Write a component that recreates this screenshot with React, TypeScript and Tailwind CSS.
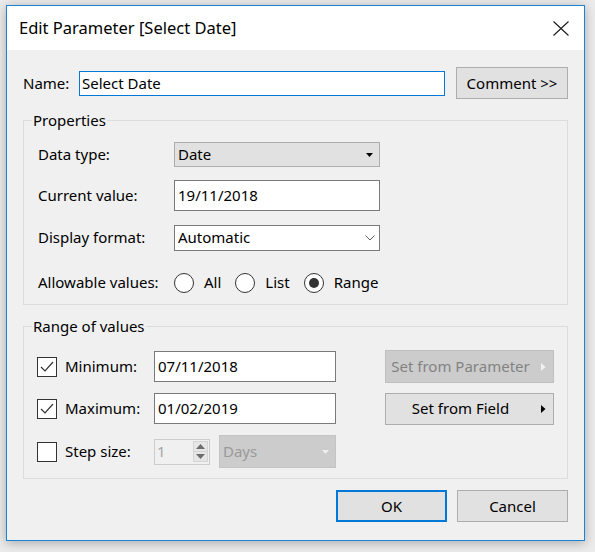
import type { ReactNode } from "react";

function CloseIcon() {
	return (
		<svg width="16" height="15" viewBox="0 0 16 15" className="block">
			<path d="M0.5 0.5 L15.5 14.5 M15.5 0.5 L0.5 14.5" stroke="#1a1a1a" strokeWidth="1.1" fill="none" />
		</svg>
	);
}

function Checkbox({ checked }: { checked?: boolean }) {
	return (
		<div className="w-[20px] h-[20px] shrink-0 border border-[#333333] bg-white">
			{checked && (
				<svg width="18" height="18" viewBox="0 0 18 18" className="block">
					<path d="M3 9 L7 13 L15 4" stroke="#333333" strokeWidth="1.2" fill="none" />
				</svg>
			)}
		</div>
	);
}

function Radio({ selected, label }: { selected?: boolean; label: string }) {
	return (
		<div className="flex items-center">
			<div className="w-[20px] h-[20px] rounded-full border border-[#333333] bg-white flex items-center justify-center">
				{selected && <div className="w-[10px] h-[10px] rounded-full bg-[#333333]" />}
			</div>
			<span className="ml-[10px]">{label}</span>
		</div>
	);
}

function Group({ title, children, className }: { title: string; children: ReactNode; className?: string }) {
	return (
		<fieldset className={`border border-[#dcdcdc] ${className ?? ""}`}>
			<legend className="ml-[8px] px-[1px] leading-[20px]">{title}</legend>
			{children}
		</fieldset>
	);
}

function Button({
	children,
	className,
	disabled,
	arrow,
}: {
	children: ReactNode;
	className?: string;
	disabled?: boolean;
	arrow?: boolean;
}) {
	const look = disabled ? "bg-[#cccccc] border-[#bfbfbf] text-[#838383]" : "bg-[#e1e1e1] border-[#adadad] text-black";
	return (
		<button type="button" className={`flex items-center border ${look} ${className ?? ""}`}>
			<span className="flex-1 text-center">{children}</span>
			{arrow && (
				<span className="w-[18px] flex items-center">
					<svg width="5" height="8" viewBox="0 0 5 8" className="ml-[6px] block">
						<path d="M0 0 L4.5 4 L0 8 Z" fill={disabled ? "#f2f2f2" : "#000000"} />
					</svg>
				</span>
			)}
		</button>
	);
}

function PropRow({ label, children, className }: { label: string; children: ReactNode; className?: string }) {
	return (
		<div className={`h-[31px] flex items-center ${className ?? ""}`}>
			<span className="w-[136px] shrink-0">{label}</span>
			{children}
		</div>
	);
}

export default function App() {
	return (
		<div className="w-[595px] h-[552px] bg-[#ebebeb] pt-[5px] pl-[6px] font-['Noto_Sans',sans-serif] text-[15px] text-black">
			<div className="w-[579px] h-[536px] border border-[#1883d7] bg-[#f0f0f0] shadow-[0_2px_10px_rgba(0,0,0,0.28)] flex flex-col">
				<div className="h-[44px] shrink-0 bg-white flex items-center justify-between pl-[12px] pr-[15px]">
					<span className="text-[16.5px]">Edit Parameter [Select Date]</span>
					<CloseIcon />
				</div>

				<div className="px-[16px] pt-[17px] flex flex-col">
					<div className="h-[32px] flex items-center">
						<span className="w-[56px] shrink-0">Name:</span>
						<div className="w-[366px] h-[25px] border border-[#0078d7] bg-white pl-[2px] flex items-center">
							Select Date
						</div>
						<Button className="ml-[11px] w-[112px] h-[32px]">Comment &gt;&gt;</Button>
					</div>

					<Group title="Properties" className="mt-[11px]">
						<div className="pl-[14px] pb-[6px]">
							<PropRow label="Data type:" className="mt-[9px]">
								<div className="w-[206px] h-[25px] border border-[#adadad] bg-[#e1e1e1] pl-[3px] pr-[6px] flex items-center justify-between">
									<span>Date</span>
									<svg width="7" height="4" viewBox="0 0 7 4" className="block">
										<path d="M0 0 L7 0 L3.5 4 Z" fill="#000000" />
									</svg>
								</div>
							</PropRow>
							<PropRow label="Current value:" className="mt-[10px]">
								<div className="w-[206px] h-[31px] border border-[#7a7a7a] bg-white pl-[3px] flex items-center">
									19/11/2018
								</div>
							</PropRow>
							<PropRow label="Display format:" className="mt-[11px]">
								<div className="w-[206px] h-[26px] border border-[#7a7a7a] bg-white pl-[3px] pr-[4px] flex items-center justify-between">
									<span>Automatic</span>
									<svg width="10" height="6" viewBox="0 0 10 6" className="block">
										<path d="M0.5 0.5 L5 5 L9.5 0.5" stroke="#606060" strokeWidth="1" fill="none" />
									</svg>
								</div>
							</PropRow>
							<PropRow label="Allowable values:" className="mt-[14px]">
								<div className="flex items-center gap-[14px]">
									<Radio label="All" />
									<Radio label="List" />
									<Radio label="Range" selected />
								</div>
							</PropRow>
						</div>
					</Group>

					<Group title="Range of values" className="mt-[11px]">
						<div className="pl-[13px] pb-[10px]">
							<div className="h-[33px] mt-[14px] flex items-center">
								<Checkbox checked />
								<span className="ml-[8px] w-[89px] shrink-0">Minimum:</span>
								<div className="w-[182px] h-[31px] border border-[#7a7a7a] bg-white pl-[3px] flex items-center">
									07/11/2018
								</div>
								<Button disabled arrow className="ml-[49px] w-[169px] h-[33px]">
									Set from Parameter
								</Button>
							</div>
							<div className="h-[33px] mt-[9px] flex items-center">
								<Checkbox checked />
								<span className="ml-[8px] w-[89px] shrink-0">Maximum:</span>
								<div className="w-[182px] h-[31px] border border-[#7a7a7a] bg-white pl-[3px] flex items-center">
									01/02/2019
								</div>
								<Button arrow className="ml-[49px] w-[169px] h-[32px]">
									Set from Field
								</Button>
							</div>
							<div className="h-[33px] mt-[10px] flex items-center">
								<Checkbox />
								<span className="ml-[8px] w-[89px] shrink-0">Step size:</span>
								<div className="w-[56px] h-[26px] border border-[#cccccc] bg-[#f0f0f0] flex items-center">
									<span className="flex-1 pl-[2px] text-[#a6a6a6]">1</span>
									<div className="w-[15px] h-[21px] mr-[1px] flex flex-col border border-[#d4d4d4]">
										<div className="flex-1 bg-[#e6e6e6] flex items-center justify-center border-b border-[#d4d4d4]">
											<svg width="9" height="5" viewBox="0 0 9 5" className="block">
												<path d="M0 5 L4.5 0 L9 5 Z" fill="#6d6d6d" />
											</svg>
										</div>
										<div className="flex-1 bg-[#e6e6e6] flex items-center justify-center">
											<svg width="9" height="5" viewBox="0 0 9 5" className="block">
												<path d="M0 0 L9 0 L4.5 5 Z" fill="#6d6d6d" />
											</svg>
										</div>
									</div>
								</div>
								<div className="ml-[9px] w-[117px] h-[33px] border border-[#c4c4c4] bg-[#cccccc] pl-[3px] pr-[6px] flex items-center justify-between text-[#9a9a9a]">
									<span>Days</span>
									<svg width="7" height="4" viewBox="0 0 7 4" className="block">
										<path d="M0 0 L7 0 L3.5 4 Z" fill="#eeeeee" />
									</svg>
								</div>
							</div>
						</div>
					</Group>

					<div className="mt-[11px] flex justify-end gap-[10px]">
						<button type="button" className="w-[111px] h-[32px] border-2 border-[#0078d7] bg-[#e1e1e1]">
							OK
						</button>
						<button type="button" className="w-[111px] h-[32px] border border-[#adadad] bg-[#e1e1e1]">
							Cancel
						</button>
					</div>
				</div>
			</div>
		</div>
	);
}
